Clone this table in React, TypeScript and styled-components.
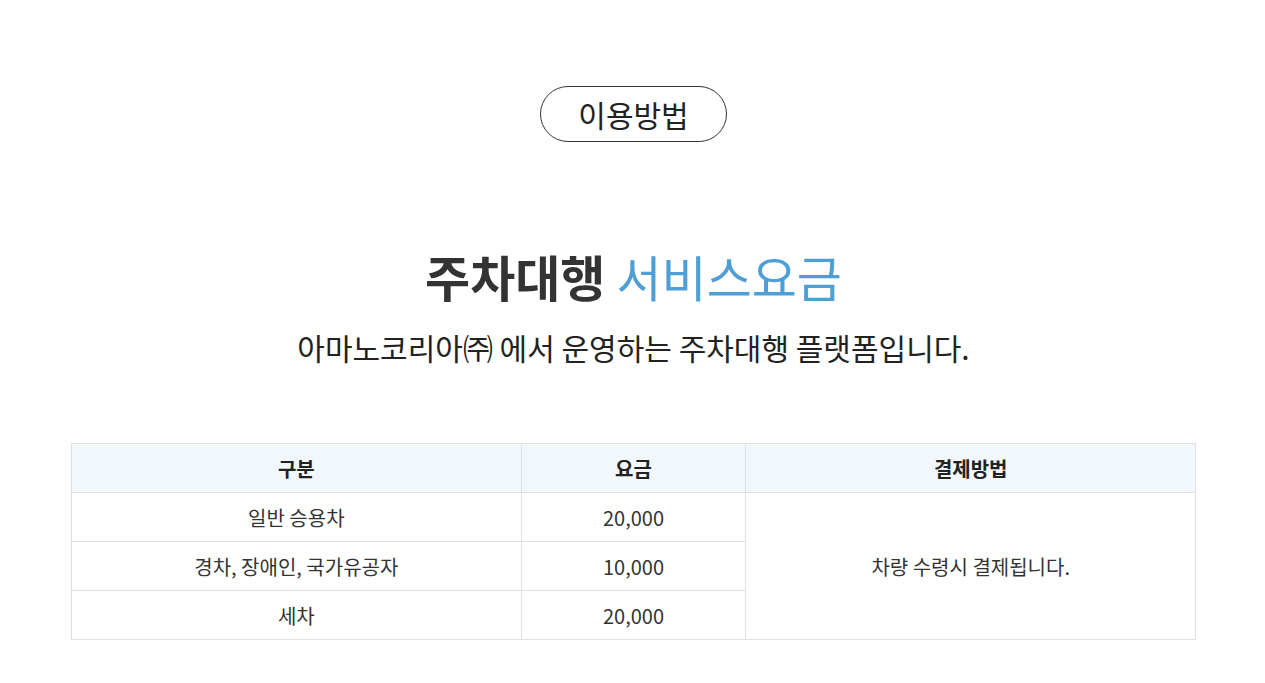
import styled, { createGlobalStyle } from "styled-components";

const GlobalStyle = createGlobalStyle`
   * {
      box-sizing: border-box;
   }
   body {
      margin: 0;
      background: #fff;
      color: #333;
      font-family: "Noto Sans CJK KR", Lato, sans-serif;
   }
`;

interface FeeRow {
   label: string;
   fee: string;
}

const rows: FeeRow[] = [
   { label: "일반 승용차", fee: "20,000" },
   { label: "경차, 장애인, 국가유공자", fee: "10,000" },
   { label: "세차", fee: "20,000" },
];

function App() {
   return (
      <>
         <GlobalStyle />
         <Section>
            <Pill>이용방법</Pill>
            <Title>
               주차대행 <span className="accent">서비스요금</span>
            </Title>
            <SubTitle>아마노코리아㈜ 에서 운영하는 주차대행 플랫폼입니다.</SubTitle>
            <FeeTable>
               <colgroup>
                  <col style={{ width: "40%" }} />
                  <col style={{ width: "20%" }} />
                  <col style={{ width: "40%" }} />
               </colgroup>
               <thead>
                  <tr>
                     <HeadCell>구분</HeadCell>
                     <HeadCell>요금</HeadCell>
                     <HeadCell>결제방법</HeadCell>
                  </tr>
               </thead>
               <tbody>
                  {rows.map((row, i) => (
                     <tr key={row.label}>
                        <Cell>{row.label}</Cell>
                        <Cell>{row.fee}</Cell>
                        {i === 0 && <Cell rowSpan={rows.length}>차량 수령시 결제됩니다.</Cell>}
                     </tr>
                  ))}
               </tbody>
            </FeeTable>
         </Section>
      </>
   );
}

export default App;

const Section = styled.section`
   display: flex;
   flex-direction: column;
   align-items: center;
   padding: 86px 69px 40px 71px;
`;

const Pill = styled.div`
   width: 187px;
   height: 56px;
   display: flex;
   align-items: center;
   justify-content: center;
   border: 1px solid #333;
   border-radius: 28px;
   font-size: 30px;
   line-height: 1;
   color: #222;
`;

const Title = styled.h2`
   margin: 106px 0 0;
   font-size: 49px;
   line-height: 55px;
   font-weight: 700;
   color: #333;

   .accent {
      font-weight: 400;
      color: #4e9fd6;
   }
`;

const SubTitle = styled.p`
   margin: 26px 0 0;
   font-size: 30px;
   line-height: 36px;
   color: #222;
`;

const FeeTable = styled.table`
   width: 100%;
   margin-top: 78px;
   border-collapse: collapse;
   table-layout: fixed;
`;

const HeadCell = styled.th`
   height: 49px;
   background: #f2f7fb;
   border: 1px solid #dde0e4;
   font-size: 20px;
   font-weight: 700;
   color: #222;
   text-align: center;
`;

const Cell = styled.td`
   height: 49px;
   border: 1px solid #dde0e4;
   font-size: 20px;
   color: #333;
   text-align: center;
`;
